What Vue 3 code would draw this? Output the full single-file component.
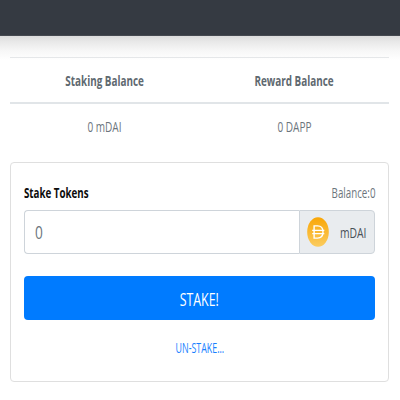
<script setup>
import { ref } from 'vue'

const amount = ref('')
const balances = [
  { title: 'Staking Balance', value: '0 mDAI' },
  { title: 'Reward Balance', value: '0 DAPP' },
]
</script>

<template>
  <div class="page">
    <nav class="navbar"></nav>
    <main class="content">
      <table class="balances">
        <thead>
          <tr>
            <th v-for="b in balances" :key="b.title"><span class="t bold head">{{ b.title }}</span></th>
          </tr>
        </thead>
        <tbody>
          <tr>
            <td v-for="b in balances" :key="b.title"><span class="t">{{ b.value }}</span></td>
          </tr>
        </tbody>
      </table>
      <form class="card" @submit.prevent>
        <div class="labels">
          <label class="t bold strong left">Stake Tokens</label>
          <span class="t bal right">Balance:0</span>
        </div>
        <div class="group">
          <div class="field">
            <input v-model="amount" class="t input left" type="text" placeholder="0" />
          </div>
          <div class="append">
            <svg class="coin" viewBox="0 0 22 30" preserveAspectRatio="none">
              <defs>
                <linearGradient id="gold" x1="0" y1="0" x2="0" y2="1">
                  <stop offset="0" stop-color="#f9a606" />
                  <stop offset="1" stop-color="#fbcc5f" />
                </linearGradient>
              </defs>
              <ellipse cx="11" cy="15" rx="10.8" ry="14.8" fill="url(#gold)" />
              <path d="M7.1 8.9H10.5C14.2 8.9 16 11.4 16 15S14.2 21.1 10.5 21.1H7.1Z" fill="none" stroke="#fff" stroke-width="1.4" />
              <path d="M5.2 13.4H17.3M5.2 16.6H17.3" fill="none" stroke="#fff" stroke-width="1.2" />
            </svg>
            <span class="t unit right">mDAI</span>
          </div>
        </div>
        <button class="stake" type="submit"><span class="t">STAKE!</span></button>
        <button class="unstake" type="button"><span class="t">UN-STAKE...</span></button>
      </form>
    </main>
  </div>
</template>

<style>
body {
  background: #fff;
}
</style>

<style scoped>
.page {
  height: 400px;
  overflow: hidden;
  font-family: "Open Sans", "Noto Sans", sans-serif;
  font-size: 15px;
  line-height: 20px;
  color: #6c757d;
  background: linear-gradient(#dcdcdc 36px, #e9e9e9 42px, #f7f7f7 51px, #fff 60px);
}
.navbar {
  height: 36px;
  box-sizing: border-box;
  background: #353a42;
  border-bottom: 1px solid #454950;
}
.content {
  padding: 21px 11px 0 10px;
}
.t {
  display: inline-block;
  white-space: nowrap;
  transform: scaleX(0.67);
}
.t.bold {
  font-weight: 700;
  transform: scaleX(0.66);
}
.t.strong {
  transform: scaleX(0.65);
}
.t.bal {
  transform: scaleX(0.65);
}
.left {
  transform-origin: left center;
}
.right {
  transform-origin: right center;
}
.balances {
  width: 100%;
  height: 90px;
  table-layout: fixed;
  border-collapse: separate;
  border-spacing: 0;
}
.balances th,
.balances td {
  padding: 0;
  text-align: center;
  vertical-align: middle;
}
.balances th {
  height: 44px;
  border-top: 1px solid #e5e7e9;
  border-bottom: 2px solid #e1e5e8;
}
.balances td {
  height: 43px;
}
.head {
  color: #606970;
}
.card {
  box-sizing: border-box;
  height: 220px;
  margin-top: 15px;
  padding: 19px 13px 0;
  border: 1px solid #dfdfdf;
  border-radius: 4px;
}
.labels {
  display: flex;
  justify-content: space-between;
  height: 28px;
}
.strong {
  color: #0c0c0c;
}
.group {
  display: flex;
  height: 44px;
}
.field {
  flex: 1;
  box-sizing: border-box;
  padding: 0 10px;
  border: 1px solid #ced4da;
  border-right: 0;
  border-radius: 4px 0 0 4px;
}
.input {
  width: 100%;
  height: 42px;
  padding: 0;
  border: 0;
  outline: 0;
  background: transparent;
  font: 19px "Open Sans", sans-serif;
}
.t.input {
  transform: scaleX(0.72);
}
.input::placeholder {
  color: #6c757d;
}
.append {
  box-sizing: border-box;
  display: flex;
  align-items: center;
  justify-content: space-between;
  width: 76px;
  padding: 0 8px 0 7px;
  border: 1px solid #ced4da;
  border-radius: 0 4px 4px 0;
  background: #e9ecef;
}
.coin {
  flex: none;
  width: 22px;
  height: 30px;
}
.unit {
  color: #495057;
  margin-left: -4px;
}
.t.unit {
  transform: scaleX(0.69);
}
.stake,
.unstake {
  display: block;
  width: 100%;
  padding: 0;
  border: 0;
  font-family: inherit;
}
.stake {
  height: 44px;
  margin-top: 22px;
  border-radius: 4px;
  background: #007bff;
  color: #fff;
  font-size: 18.5px;
  line-height: 46px;
}
.unstake {
  height: 30px;
  margin-top: 13px;
  background: transparent;
  color: #187fff;
  font-size: 14.5px;
  line-height: 30px;
}
.unstake .t {
  transform: scaleX(0.61);
}
</style>
